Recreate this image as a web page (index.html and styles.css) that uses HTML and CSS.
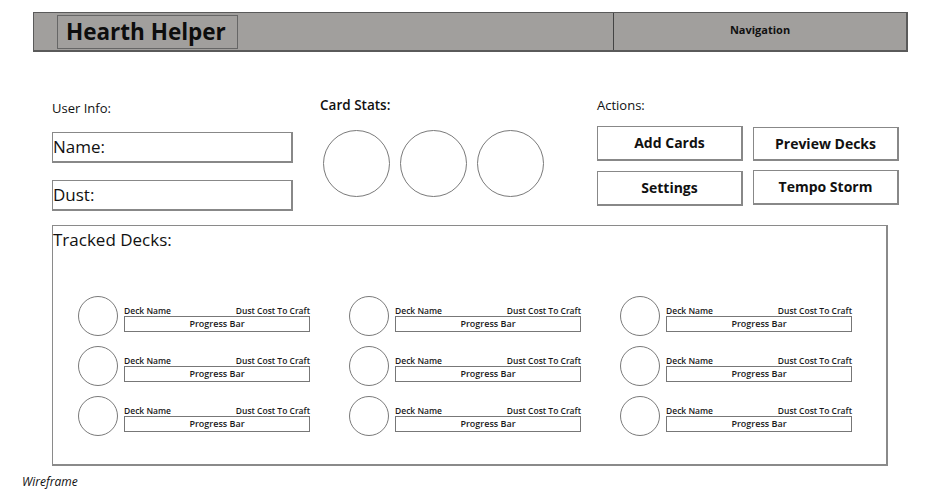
FILE: index.html
```html
<!DOCTYPE html>
<html lang="en">
<head>
<meta charset="utf-8">
<title>Hearth Helper</title>
<link rel="stylesheet" href="styles.css">
</head>
<body>
<header class="topbar">
  <div class="brand-area">
    <div class="brand">Hearth Helper</div>
  </div>
  <nav class="nav">Navigation</nav>
</header>

<main class="page">
  <section class="top-row">
    <div class="user-info">
      <h2 class="label-sm">User Info:</h2>
      <div class="field">Name:</div>
      <div class="field">Dust:</div>
    </div>
    <div class="card-stats">
      <h2 class="label-sm semi">Card Stats:</h2>
      <div class="stat-circles">
        <span class="stat-circle"></span>
        <span class="stat-circle"></span>
        <span class="stat-circle"></span>
      </div>
    </div>
    <div class="actions">
      <h2 class="label-sm">Actions:</h2>
      <div class="action-grid">
        <button class="action-btn">Add Cards</button>
        <button class="action-btn lower">Preview Decks</button>
        <button class="action-btn">Settings</button>
        <button class="action-btn raised">Tempo Storm</button>
      </div>
    </div>
  </section>

  <section class="tracked">
    <h2 class="tracked-title">Tracked Decks:</h2>
    <div class="deck-grid">
      <div class="deck"><span class="deck-icon"></span><div class="deck-info"><div class="deck-meta"><span>Deck Name</span><span>Dust Cost To Craft</span></div><div class="progress">Progress Bar</div></div></div>
      <div class="deck"><span class="deck-icon"></span><div class="deck-info"><div class="deck-meta"><span>Deck Name</span><span>Dust Cost To Craft</span></div><div class="progress">Progress Bar</div></div></div>
      <div class="deck"><span class="deck-icon"></span><div class="deck-info"><div class="deck-meta"><span>Deck Name</span><span>Dust Cost To Craft</span></div><div class="progress">Progress Bar</div></div></div>
      <div class="deck"><span class="deck-icon"></span><div class="deck-info"><div class="deck-meta"><span>Deck Name</span><span>Dust Cost To Craft</span></div><div class="progress">Progress Bar</div></div></div>
      <div class="deck"><span class="deck-icon"></span><div class="deck-info"><div class="deck-meta"><span>Deck Name</span><span>Dust Cost To Craft</span></div><div class="progress">Progress Bar</div></div></div>
      <div class="deck"><span class="deck-icon"></span><div class="deck-info"><div class="deck-meta"><span>Deck Name</span><span>Dust Cost To Craft</span></div><div class="progress">Progress Bar</div></div></div>
      <div class="deck"><span class="deck-icon"></span><div class="deck-info"><div class="deck-meta"><span>Deck Name</span><span>Dust Cost To Craft</span></div><div class="progress">Progress Bar</div></div></div>
      <div class="deck"><span class="deck-icon"></span><div class="deck-info"><div class="deck-meta"><span>Deck Name</span><span>Dust Cost To Craft</span></div><div class="progress">Progress Bar</div></div></div>
      <div class="deck"><span class="deck-icon"></span><div class="deck-info"><div class="deck-meta"><span>Deck Name</span><span>Dust Cost To Craft</span></div><div class="progress">Progress Bar</div></div></div>
    </div>
  </section>
</main>

<footer class="caption">Wireframe</footer>
</body>
</html>
```

FILE: styles.css
```css
* { box-sizing: border-box; }

html, body {
  margin: 0;
  padding: 0;
  background: #ffffff;
  color: #111111;
  font-family: "Open Sans", "DejaVu Sans", sans-serif;
}

body {
  width: 940px;
  height: 500px;
  overflow: hidden;
}

/* Header */
.topbar {
  display: flex;
  margin: 12px 0 0 33px;
  width: 875px;
  height: 40px;
  background: #a19f9d;
  border: 1px solid #5a5a5a;
  border-right-width: 2px;
  border-bottom-width: 2px;
}

.brand-area {
  flex: 0 0 579px;
  padding: 2px 0 0 23px;
}

.brand {
  width: 181px;
  height: 34px;
  border: 1px solid #666666;
  padding-left: 8px;
  font-weight: 700;
  font-size: 22.5px;
  line-height: 32px;
  color: #0d0d0d;
}

.nav {
  flex: 1;
  border-left: 1px solid #444444;
  text-align: center;
  font-weight: 700;
  font-size: 11px;
  line-height: 34px;
  color: #111111;
}

/* Main */
.page {
  padding-left: 52px;
}

.top-row {
  display: flex;
  margin-top: 43px;
  height: 130px;
}

.label-sm {
  margin: 0;
  font-weight: 400;
  font-size: 13px;
  line-height: 18px;
}

.label-sm.semi {
  font-weight: 600;
}

.user-info {
  width: 241px;
  padding-top: 4px;
}

.field {
  width: 241px;
  height: 31px;
  border: 1px solid #888888;
  border-width: 1px 2px 2px 1px;
  font-size: 17px;
  line-height: 27px;
  margin-top: 17px;
}

.user-info .label-sm + .field {
  margin-top: 15px;
}

.card-stats {
  margin-left: 27px;
  width: 250px;
  padding-top: 1px;
}

.card-stats .label-sm {
  font-size: 13.5px;
}

.stat-circles {
  display: flex;
  gap: 10px;
  margin-top: 16px;
  padding-left: 3px;
}

.stat-circle {
  width: 67px;
  height: 67px;
  border: 1.5px solid #7a7a7a;
  border-radius: 50%;
}

.actions {
  margin-left: 27px;
  width: 302px;
  padding-top: 1px;
}

.action-grid {
  display: grid;
  grid-template-columns: 146px 146px;
  column-gap: 10px;
  row-gap: 10px;
  margin-top: 12px;
}

.action-btn {
  height: 35px;
  background: #ffffff;
  border: 1px solid #888888;
  border-width: 1px 2px 2px 1px;
  font-family: "Open Sans", "DejaVu Sans", sans-serif;
  font-weight: 700;
  font-size: 14px;
  color: #111111;
  padding: 0;
  line-height: 30px;
}

.action-btn.lower { margin-top: 1px; height: 34px; }
.action-btn.raised { margin-top: -1px; }

/* Tracked decks */
.tracked {
  width: 836px;
  height: 241px;
  border: 1px solid #8a8a8a;
  border-width: 1px 2px 2px 1px;
}

.tracked-title {
  margin: 0;
  font-weight: 400;
  font-size: 17px;
  line-height: 28px;
}

.deck-grid {
  display: grid;
  grid-template-columns: repeat(3, 232px);
  column-gap: 39px;
  row-gap: 10px;
  margin-top: 42px;
  padding-left: 25px;
}

.deck {
  display: flex;
  gap: 6px;
  height: 40px;
}

.deck-icon {
  flex: 0 0 40px;
  height: 40px;
  border: 1px solid #7a7a7a;
  border-radius: 50%;
}

.deck-info {
  width: 187px;
  padding-top: 9px;
}

.deck-meta {
  display: flex;
  justify-content: space-between;
  font-size: 8.5px;
  font-weight: 600;
  line-height: 11px;
  color: #1a1a1a;
}

.progress {
  height: 16px;
  border: 1px solid #777777;
  text-align: center;
  font-size: 9px;
  font-weight: 600;
  line-height: 14px;
  color: #1a1a1a;
}

.caption {
  margin: 8px 0 0 22px;
  font-style: italic;
  font-size: 12px;
  line-height: 16px;
  color: #111111;
}
```
